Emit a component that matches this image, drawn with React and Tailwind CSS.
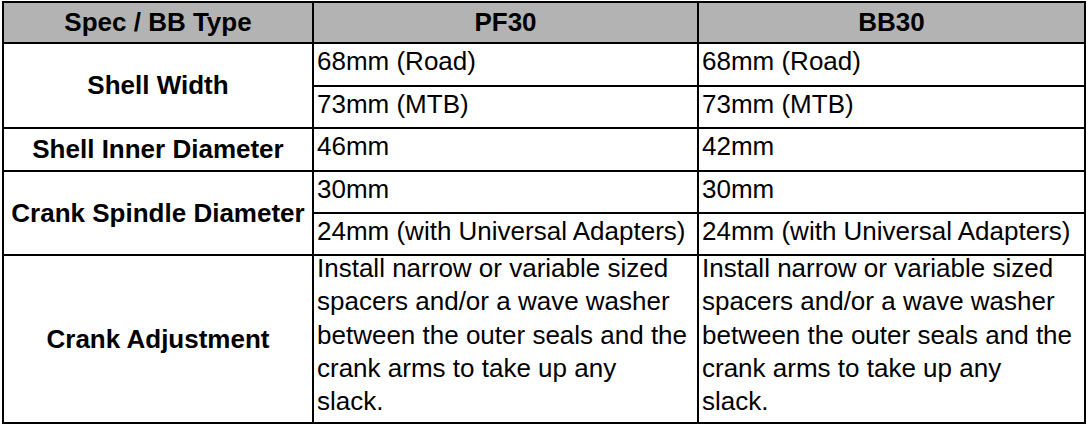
import React from 'react';

const adjustLines = [
  'Install narrow or variable sized',
  'spacers and/or a wave washer',
  'between the outer seals and the',
  'crank arms to take up any',
  'slack.',
];

function Label({ children, className = '' }) {
  return (
    <div className={`bg-white flex items-center justify-center font-bold ${className}`}>
      {children}
    </div>
  );
}

// single line value cell
function Cell({ children }) {
  return (
    <div className="bg-white pl-[3px] pt-[1px] leading-[33.3px] whitespace-nowrap">{children}</div>
  );
}

function Para() {
  return (
    <div className="bg-white pl-[3px] leading-[33.3px] whitespace-nowrap">
      <div className="-mt-[4px]">
        {adjustLines.map((l) => (
          <div key={l}>{l}</div>
        ))}
      </div>
    </div>
  );
}

function Head({ children }) {
  return (
    <div className="bg-[#b3b3b3] flex items-center justify-center font-bold">{children}</div>
  );
}

export default function App() {
  return (
    <div className="bg-white w-[1088px] h-[428px] pt-[1px] pl-[2px] font-['Liberation_Sans',Arial,sans-serif] text-[26px] text-black">
      {/* spec table */}
      <div className="grid grid-cols-[308px_383px_385px] grid-rows-[39px_41px_40px_41px_40px_40px_166px] gap-[2px] p-[2px] bg-black w-[1084px]">
        <Head>Spec / BB Type</Head>
        <Head>PF30</Head>
        <Head>BB30</Head>

        <Label className="row-span-2">Shell Width</Label>
        <Cell>68mm (Road)</Cell>
        <Cell>68mm (Road)</Cell>
        <Cell>73mm (MTB)</Cell>
        <Cell>73mm (MTB)</Cell>

        <Label>Shell Inner Diameter</Label>
        <Cell>46mm</Cell>
        <Cell>42mm</Cell>

        <Label className="row-span-2">Crank Spindle Diameter</Label>
        <Cell>30mm</Cell>
        <Cell>30mm</Cell>
        <Cell>24mm (with Universal Adapters)</Cell>
        <Cell>24mm (with Universal Adapters)</Cell>

        <Label>Crank Adjustment</Label>
        <Para />
        <Para />
      </div>
    </div>
  );
}
